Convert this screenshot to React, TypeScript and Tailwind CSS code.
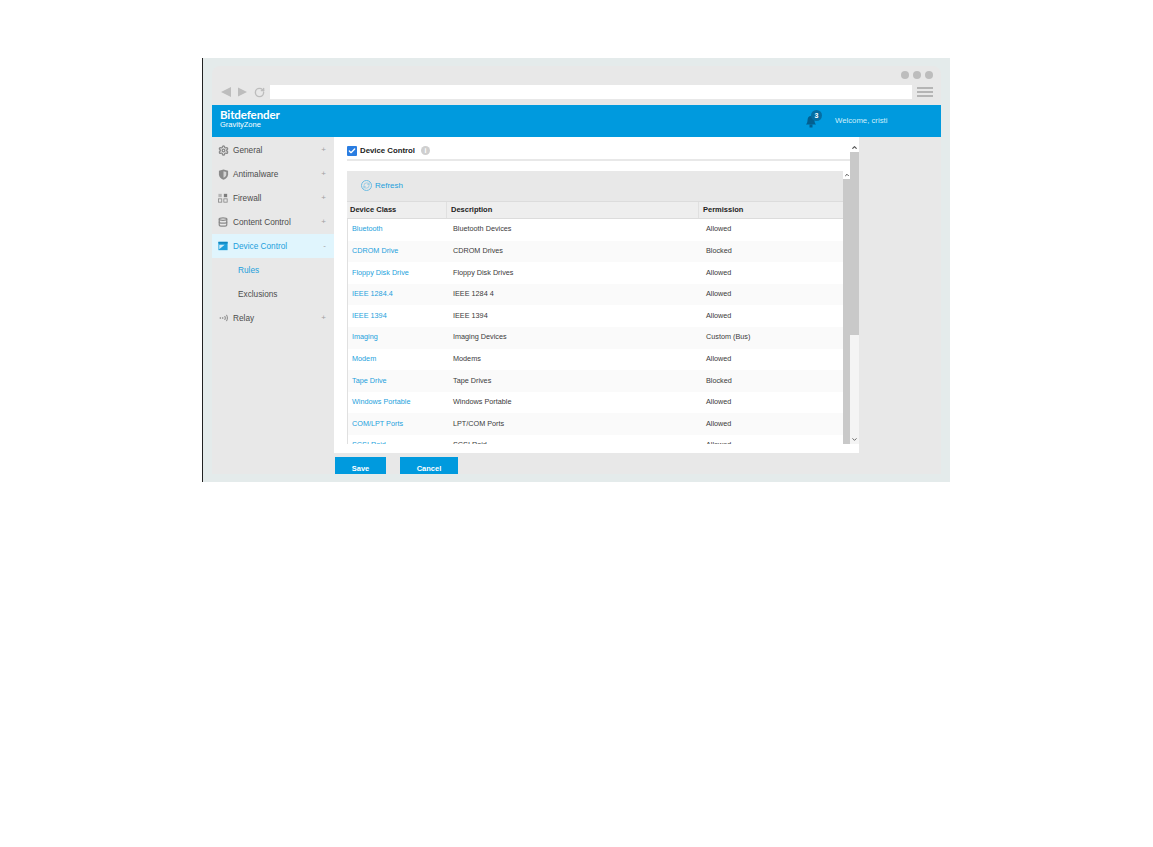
import { Check, ChevronDown, ChevronUp, Database, RefreshCw, RotateCw, Settings } from 'lucide-react';

const menuItems = [
  { label: 'General', icon: 'gear' },
  { label: 'Antimalware', icon: 'shield' },
  { label: 'Firewall', icon: 'grid' },
  { label: 'Content Control', icon: 'db' },
];

const rows = [
  ['Bluetooth', 'Bluetooth Devices', 'Allowed'],
  ['CDROM Drive', 'CDROM Drives', 'Blocked'],
  ['Floppy Disk Drive', 'Floppy Disk Drives', 'Allowed'],
  ['IEEE 1284.4', 'IEEE 1284 4', 'Allowed'],
  ['IEEE 1394', 'IEEE 1394', 'Allowed'],
  ['Imaging', 'Imaging Devices', 'Custom (Bus)'],
  ['Modem', 'Modems', 'Allowed'],
  ['Tape Drive', 'Tape Drives', 'Blocked'],
  ['Windows Portable', 'Windows Portable', 'Allowed'],
  ['COM/LPT Ports', 'LPT/COM Ports', 'Allowed'],
  ['SCSI Raid', 'SCSI Raid', 'Allowed'],
];

function MenuIcon({ name }: { name: string }) {
  if (name === 'gear') return <Settings className="w-[11px] h-[11px] text-[#8a8a8a]" strokeWidth={3} />;
  if (name === 'db') return <Database className="w-[10px] h-[10px] text-[#8a8a8a]" strokeWidth={3} />;
  if (name === 'shield') {
    return (
      <svg viewBox="0 0 12 12" className="w-[11px] h-[11px]">
        <path d="M6 .5 11 2v4c0 3-2.500 4.800-5 5.700C3.500 10.800 1 9 1 6V2z" fill="#8a8a8a" />
        <path d="M6 2.500 9 3.400V6c0 1.800-1.500 3-3 3.600z" fill="#d4d4d4" />
      </svg>
    );
  }
  if (name === 'grid') {
    return (
      <svg viewBox="0 0 12 12" className="w-[10px] h-[10px]">
        <rect x="0.500" y="1" width="4" height="4" fill="#b5b5b5" />
        <rect x="7" y="1" width="4" height="4" fill="#7d7d7d" />
        <rect x="0.500" y="7" width="4" height="4" fill="none" stroke="#8a8a8a" />
        <rect x="7" y="7" width="4" height="4" fill="none" stroke="#8a8a8a" />
      </svg>
    );
  }
  if (name === 'card') {
    return (
      <svg viewBox="0 0 12 12" className="w-[10px] h-[10px]">
        <rect x="0.500" y="1" width="11" height="10" fill="#1d9fdc" />
        <path d="M1.500 10 8 4.500 1.500 4.500z" fill="#ffffff" opacity="0.8" />
        <rect x="0.500" y="1" width="11" height="2" fill="#0d86c0" />
      </svg>
    );
  }
  return (
    <svg viewBox="0 0 14 12" className="w-[11px] h-[10px]" fill="none" stroke="#7d7d7d" strokeWidth="1.200">
      <circle cx="3" cy="6" r="1" fill="#7d7d7d" stroke="none" />
      <circle cx="6" cy="6" r="1" fill="#7d7d7d" stroke="none" />
      <path d="M8.500 3.500c1 1.500 1 3.500 0 5" />
      <path d="M10.800 2c1.500 2.500 1.500 5.500 0 8" />
    </svg>
  );
}

function MenuRow({ label, icon, active, mark }: { label: string; icon: string; active?: boolean; mark: string }) {
  return (
    <div className={`h-6 flex items-center pl-[6px] pr-[8px] ${active ? 'bg-[#e0f5fd]' : ''}`}>
      <span className="w-[15px] flex shrink-0">
        <MenuIcon name={icon} />
      </span>
      <span className={`flex-1 pt-[2px] text-[8.250px] ${active ? 'text-[#1d9fdc]' : 'text-[#4d4d4d]'}`}>{label}</span>
      <span className="text-[8px] text-[#a0a0a0] leading-none">{mark}</span>
    </div>
  );
}

export default function App() {
  return (
    <div className="min-h-[847px] bg-white pt-[58px] pl-[202px] font-['Liberation_Sans',sans-serif]">
      <div className="w-[748px] h-[424px] border-l border-[#222222] bg-[#e4ebeb] pt-2 pl-[9px] pr-[9px]">
        <div className="h-[408px] bg-[#e8e8e8] rounded-t-lg flex flex-col">
          {/* browser chrome */}
          <div className="h-[39px] shrink-0 pl-[9px] pr-[8px] pt-[5px]">
            <div className="flex justify-end gap-[4px]">
              <span className="w-2 h-2 rounded-full bg-[#bdbdbd]" />
              <span className="w-2 h-2 rounded-full bg-[#bdbdbd]" />
              <span className="w-2 h-2 rounded-full bg-[#bdbdbd]" />
            </div>
            <div className="flex items-center mt-[6px]">
              <div className="w-[49px] flex items-center gap-[7px] shrink-0">
                <svg viewBox="0 0 10 10" className="w-[10px] h-[10px]"><path d="M10 0v10L0 5z" fill="#bdbdbd" /></svg>
                <svg viewBox="0 0 10 10" className="w-[9px] h-[10px]"><path d="M0 0v10l10-5z" fill="#bdbdbd" /></svg>
                <RotateCw className="w-[11px] h-[11px] text-[#bdbdbd]" strokeWidth={3} />
              </div>
              <div className="w-[642px] h-[14px] bg-white" />
              <div className="ml-[5px] w-[16px] flex flex-col gap-[2px]">
                <span className="h-[2px] bg-[#b5b5b5]" />
                <span className="h-[2px] bg-[#b5b5b5]" />
                <span className="h-[2px] bg-[#b5b5b5]" />
              </div>
            </div>
          </div>

          {/* blue header */}
          <div className="h-[32px] shrink-0 bg-[#009ade] flex items-center pl-[8px] text-white">
            <div className="flex-1 pb-[4px]">
              <div className="text-[11.500px] font-bold leading-[12px] tracking-[-0.1px] font-['Lato',sans-serif]">Bitdefender</div>
              <div className="text-[7.500px] leading-[8px]">GravityZone</div>
            </div>
            <div className="relative w-[14px] h-[14px] mr-[16px]">
              <svg viewBox="0 0 14 14" className="w-[14px] h-[14px]">
                <path d="M6 2c2.500 0 3.500 2 3.500 4.500 0 2 .8 3 1.500 4H1c.7-1 1.500-2 1.500-4C2.500 4 3.500 2 6 2z" fill="#035f8f" />
                <rect x="4.500" y="10.500" width="3" height="3" fill="#035f8f" />
              </svg>
              <span className="absolute -top-[4px] left-[6px] w-[11px] h-[11px] rounded-full bg-[#046ea3] text-[7px] leading-[11px] text-center font-bold">3</span>
            </div>
            <div className="w-[106px] text-[7.750px] text-[#cdeefb]">Welcome, cristi</div>
          </div>

          <div className="flex-1 flex min-h-0">
            {/* sidebar */}
            <div className="w-[122px] shrink-0 pt-[1px]">
              {menuItems.map((m) => (
                <MenuRow key={m.label} label={m.label} icon={m.icon} mark="+" />
              ))}
              <MenuRow label="Device Control" icon="card" active mark="-" />
              <div className="h-6 flex items-center pl-[26px] pt-[2px] text-[8.250px] text-[#1d9fdc]">Rules</div>
              <div className="h-6 flex items-center pl-[26px] pt-[2px] text-[8.250px] text-[#4d4d4d]">Exclusions</div>
              <MenuRow label="Relay" icon="relay" mark="+" />
            </div>

            {/* main */}
            <div className="w-[525px] shrink-0 flex flex-col">
              <div className="h-[316px] bg-white flex">
                <div className="flex-1 min-w-0 flex flex-col">
                  <div className="h-[24px] shrink-0 ml-[13px] pt-[5px] border-b-2 border-[#e8e8e8] flex items-center">
                    <span className="w-[10px] h-[10px] rounded-[1px] bg-[#2a7de1] flex items-center justify-center">
                      <Check className="w-[8px] h-[8px] text-white" strokeWidth={4} />
                    </span>
                    <span className="ml-[3px] text-[7.800px] font-bold text-[#222222]">Device Control</span>
                    <span className="ml-[6px] w-[9px] h-[9px] rounded-full bg-[#cfcfcf] text-[7px] leading-[9px] text-center text-white font-bold">i</span>
                  </div>
                  <div className="flex ml-[13px] mt-[10px] flex-1 min-h-0">
                    <div className="w-[496px] shrink-0 flex flex-col min-h-0">
                      <div className="h-[30px] shrink-0 bg-[#e8e8e8] flex items-center pl-[14px] pb-[1px]">
                        <span className="w-[11px] h-[11px] rounded-full border border-[#6dbde3] flex items-center justify-center">
                          <RefreshCw className="w-[7px] h-[7px] text-[#6dbde3]" strokeWidth={2} />
                        </span>
                        <span className="ml-[3px] text-[8px] text-[#1d9fdc]">Refresh</span>
                      </div>
                      <div className="h-[18px] shrink-0 flex items-center bg-[#eeeeee] border-y border-[#dcdcdc] text-[7.500px] font-bold text-[#222222]">
                        <div className="w-[100px] pl-[3px] h-full flex items-center border-r border-[#e0e0e0]">Device Class</div>
                        <div className="w-[252px] pl-[4px] h-full flex items-center border-r border-[#e0e0e0]">Description</div>
                        <div className="flex-1 pl-[4px]">Permission</div>
                      </div>
                      <div className="h-[225px] overflow-hidden border-l border-[#e0e0e0] text-[7.250px]">
                        {rows.map((r, i) => (
                          <div key={r[0]} className={`h-[21.600px] flex items-center ${i % 2 ? 'bg-[#fafafa]' : 'bg-white'}`}>
                            <div className="w-[101px] pl-[4px] text-[#1d9fdc]">{r[0]}</div>
                            <div className="w-[253px] pl-[4px] text-[#3a3a3a]">{r[1]}</div>
                            <div className="flex-1 pl-[4px] text-[#3a3a3a]">{r[2]}</div>
                          </div>
                        ))}
                      </div>
                    </div>
                    <div className="w-[7px] shrink-0 h-[273px] flex flex-col">
                      <div className="h-[8px] flex items-center justify-center">
                        <ChevronUp className="w-[6px] h-[6px] text-[#555555]" strokeWidth={4} />
                      </div>
                      <div className="flex-1 bg-[#c9c9c9]" />
                    </div>
                  </div>
                </div>
                <div className="w-[9px] shrink-0 flex flex-col bg-[#f4f4f4] mt-[6px] mb-[9px]">
                  <div className="h-[9px] bg-white flex items-center justify-center">
                    <ChevronUp className="w-[7px] h-[7px] text-[#555555]" strokeWidth={4} />
                  </div>
                  <div className="h-[183px] bg-[#c9c9c9]" />
                  <div className="flex-1 flex items-end justify-center pb-[1px]">
                    <ChevronDown className="w-[7px] h-[7px] text-[#555555]" strokeWidth={3} />
                  </div>
                </div>
              </div>
              <div className="flex pt-[4px] pl-[1px] gap-[14px]">
                <div className="w-[51px] h-[17px] bg-[#009ade] text-white text-[7.500px] font-bold flex items-end justify-center">Save</div>
                <div className="w-[58px] h-[17px] bg-[#009ade] text-white text-[7.500px] font-bold flex items-end justify-center">Cancel</div>
              </div>
            </div>
          </div>
        </div>
      </div>
    </div>
  );
}
